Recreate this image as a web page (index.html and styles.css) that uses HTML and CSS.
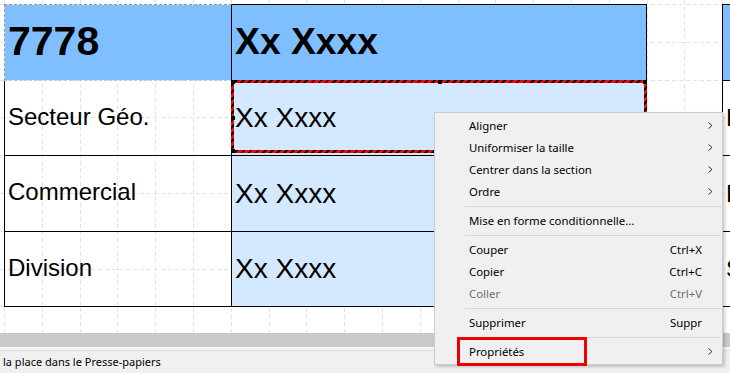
FILE: index.html
```html
<!DOCTYPE html>
<html lang="fr">
<head>
    <meta charset="UTF-8">
    <title>Concepteur d'état</title>
    <link rel="stylesheet" href="styles.css">
</head>
<body>
    <div class="designer">
        <div class="report">
            <div class="row row-head">
                <div class="cell label head-id">7778</div>
                <div class="cell value head">Xx Xxxx</div>
                <div class="cell other head"></div>
            </div>
            <div class="row row-a">
                <div class="cell label">Secteur Géo.</div>
                <div class="cell value selected">Xx Xxxx
                    <div class="sel">
                        <span class="h h-tl"></span><span class="h h-tm"></span><span class="h h-tr"></span>
                        <span class="h h-ml"></span><span class="h h-mr"></span>
                        <span class="h h-bl"></span><span class="h h-bm"></span><span class="h h-br"></span>
                    </div>
                </div>
                <div class="cell other">Date</div>
            </div>
            <div class="row row-b">
                <div class="cell label">Commercial</div>
                <div class="cell value">Xx Xxxx</div>
                <div class="cell other">Pays</div>
            </div>
            <div class="row row-a">
                <div class="cell label">Division</div>
                <div class="cell value">Xx Xxxx</div>
                <div class="cell other">Statut</div>
            </div>
        </div>
    </div>
    <div class="hbar"></div>
    <div class="status">la place dans le Presse-papiers</div>

    <div class="menu">
        <div class="item"><span class="txt">Aligner</span><span class="arrow"><svg width="5" height="7"><path d="M0.5 0.5L4 3.5L0.5 6.5" /></svg></span></div>
        <div class="item"><span class="txt">Uniformiser la taille</span><span class="arrow"><svg width="5" height="7"><path d="M0.5 0.5L4 3.5L0.5 6.5" /></svg></span></div>
        <div class="item"><span class="txt">Centrer dans la section</span><span class="arrow"><svg width="5" height="7"><path d="M0.5 0.5L4 3.5L0.5 6.5" /></svg></span></div>
        <div class="item"><span class="txt">Ordre</span><span class="arrow"><svg width="5" height="7"><path d="M0.5 0.5L4 3.5L0.5 6.5" /></svg></span></div>
        <div class="sep"></div>
        <div class="item"><span class="txt">Mise en forme conditionnelle...</span><span class="arrow"></span></div>
        <div class="sep"></div>
        <div class="item"><span class="txt">Couper</span><span class="key">Ctrl+X</span><span class="arrow"></span></div>
        <div class="item"><span class="txt">Copier</span><span class="key">Ctrl+C</span><span class="arrow"></span></div>
        <div class="item off"><span class="txt">Coller</span><span class="key">Ctrl+V</span><span class="arrow"></span></div>
        <div class="sep"></div>
        <div class="item"><span class="txt">Supprimer</span><span class="key">Suppr</span><span class="arrow"></span></div>
        <div class="sep"></div>
        <div class="item"><span class="txt">Propriétés</span><span class="arrow"><svg width="5" height="7"><path d="M0.5 0.5L4 3.5L0.5 6.5" /></svg></span></div>
        <div class="mark"></div>
    </div>
</body>
</html>
```
FILE: styles.css
```css
@charset "utf-8";

*{    box-sizing: border-box;    margin: 0px;    padding: 0px;}

body{
    width: 730px;
    height: 373px;
    overflow: hidden;
    position: relative;
    background: #fff;
    font-family: "Liberation Sans", Arial, sans-serif;
}

/* zone de dessin avec la grille en pointillés */
.designer{
    position: relative;
    height: 333px;
    overflow: hidden;
    background: #fff;
}

.designer::before,
.designer::after{
    content: "";
    position: absolute;
    left: 0;
    top: 0;
    right: 0;
    bottom: 0;
}

.designer::before{
    background: repeating-linear-gradient(to right, #e2e2e2 0 1px, transparent 1px 37.8px) 4px 0;
    -webkit-mask: repeating-linear-gradient(to bottom, #000 0 4px, transparent 4px 7px);
    mask: repeating-linear-gradient(to bottom, #000 0 4px, transparent 4px 7px);
}

.designer::after{
    background: repeating-linear-gradient(to bottom, #e2e2e2 0 1px, transparent 1px 37.8px) 0 4px;
    -webkit-mask: repeating-linear-gradient(to right, #000 0 4px, transparent 4px 7px);
    mask: repeating-linear-gradient(to right, #000 0 4px, transparent 4px 7px);
}

.report{
    position: relative;
    z-index: 1;
    padding: 4px 0 0 4px;
    width: 1100px;
}

.row{
    display: flex;
    height: 75px;
}
.row-head{ height: 77px; }
.row-b{ height: 76px; }

.cell{
    display: flex;
    align-items: center;
    border-right: 1px solid #000;
    border-bottom: 1px solid #000;
    padding-left: 3px;
    white-space: nowrap;
    color: #000;
}

.row-head .cell{ border-top: 1px solid #000; }

.label{
    width: 228px;
    border-left: 1px solid #000;
    font-size: 24px;
    padding-bottom: 3px;
}

.value{
    width: 415px;
    background: #d4e8ff;
    font-size: 28px;
}

.other{
    width: 300px;
    margin-left: 75px;
    border-left: 1px solid #000;
    font-size: 24px;
}

.head{
    background: #80bfff;
    font-size: 37.3px;
    font-weight: bold;
    padding-bottom: 2px;
}

.head-id{
    background: #80bfff;
    background-clip: padding-box;
    border-top: 1px dashed #9a9a9a !important;
    border-left: 1px dashed #9a9a9a;
    border-bottom: 1px dashed #c8c8c8;
    font-size: 41px;
    font-weight: bold;
    padding-bottom: 2px;
}

/* controle sélectionné */
.selected{ position: relative; }

.sel{
    position: absolute;
    left: -1px;
    top: -1px;
    right: -1px;
    bottom: 2px;
    border: 3px solid #000;
    border-image: repeating-linear-gradient(135deg, #ff0000 0 3px, #000 3px 5px) 3;
}

.h{
    position: absolute;
    width: 4px;
    height: 4px;
    background: #000;
}
.h-tl{ left: -3px; top: -3px; }
.h-tm{ left: 204px; top: -3px; }
.h-tr{ right: -3px; top: -3px; }
.h-ml{ left: -3px; top: 33px; }
.h-mr{ right: -3px; top: 33px; }
.h-bl{ left: -3px; bottom: -3px; }
.h-bm{ left: 204px; bottom: -3px; }
.h-br{ right: -3px; bottom: -3px; }

/* barre et statut */
.hbar{
    height: 14px;
    background: #cacaca;
    border-bottom: 3px solid #f6f6f6;
    box-sizing: content-box;
}

.status{
    height: 23px;
    border-top: 1px solid #dcdcdc;
    background: #f0f0f0;
    font-family: "Noto Sans", "Open Sans", sans-serif;
    font-size: 11px;
    line-height: 21px;
    padding-left: 3px;
    color: #000;
}

/* menu contextuel */
.menu{
    position: absolute;
    z-index: 10;
    left: 434px;
    top: 112px;
    width: 289px;
    height: 253px;
    background: #f0f0f0;
    border: 1px solid #cccccc;
    padding: 2px;
    box-shadow: 2px 2px 3px rgba(0, 0, 0, .2);
    font-family: "Noto Sans", "Open Sans", sans-serif;
    font-size: 11.4px;
    color: #000;
}

.item{
    display: flex;
    align-items: center;
    height: 22px;
    padding-left: 32px;
    padding-bottom: 2px;
}

.item .txt{ flex: 1; }

.item .key{ text-align: right; padding-right: 1px; }

.item .arrow{
    width: 17px;
    height: 20px;
    display: flex;
    align-items: center;
    padding-left: 5px;
}

.arrow svg path{
    fill: none;
    stroke: #333;
    stroke-width: 1;
}

.off{ color: #6d6d6d; }

.sep{
    height: 7px;
    margin-left: 28px;
    margin-right: -1px;
    display: flex;
    align-items: center;
}
.sep::before{
    content: "";
    flex: 1;
    border-top: 1px solid #d7d7d7;
}

.mark{
    position: absolute;
    left: 22px;
    top: 224px;
    width: 130px;
    height: 29px;
    border: 3px solid #ee0000;
}
```
